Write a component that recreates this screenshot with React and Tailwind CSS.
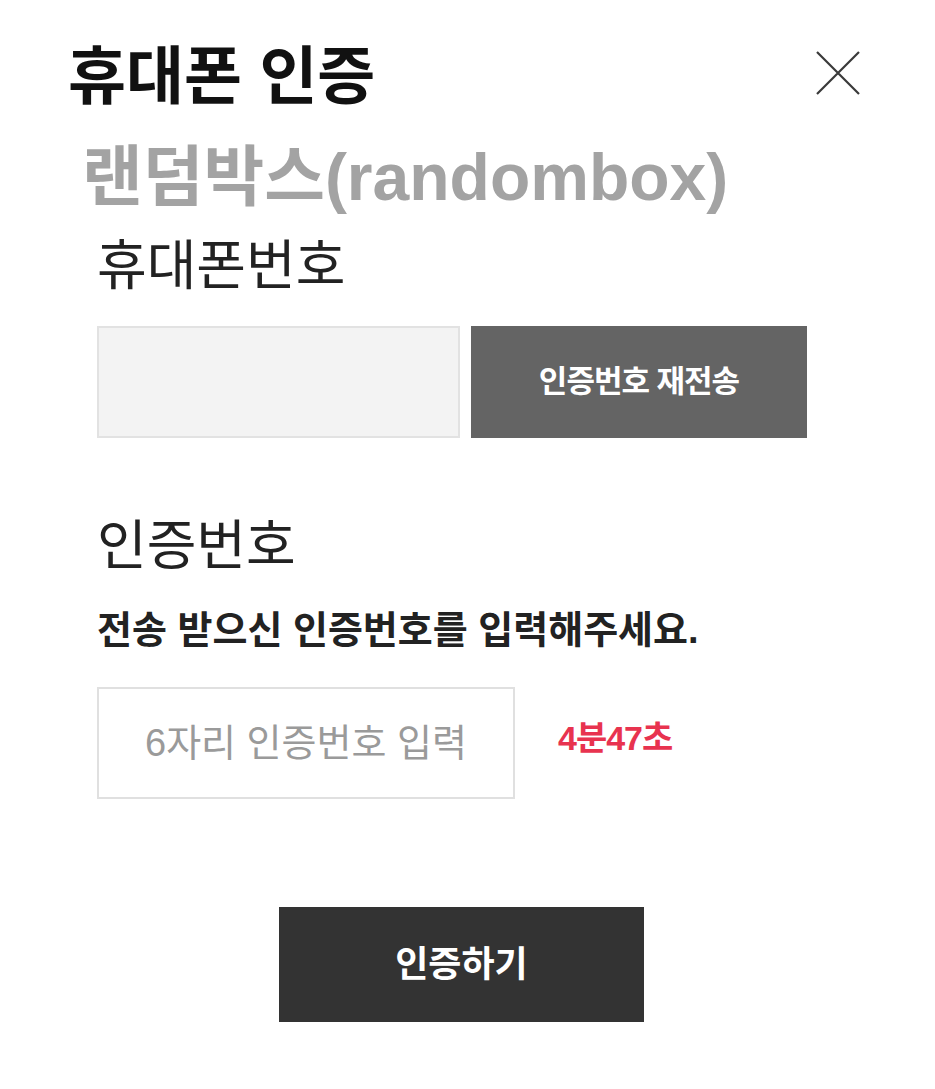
import { useState } from "react";

const font = { fontFamily: '"Liberation Sans", "Noto Sans CJK KR", sans-serif' };

export default function App() {
  const [phone, setPhone] = useState("");
  const [code, setCode] = useState("");

  return (
    <div className="w-[935px] h-[1089px] bg-white relative" style={font}>
      <div className="pl-[68px] pr-[72px] pt-[45px]">
        <div className="flex items-start justify-between">
          <h1 className="text-[63px] leading-none font-bold text-[#111]">휴대폰 인증</h1>
          <button className="mt-[3px] w-[50px] h-[50px] flex items-center justify-center">
            <svg width="48" height="48" viewBox="0 0 48 48">
              <path d="M3 3 L45 45 M45 3 L3 45" stroke="#3a3a3a" strokeWidth="2.2" fill="none" />
            </svg>
          </button>
        </div>
        <div className="mt-[36px] ml-[14px] text-[66px] leading-none font-bold text-[#a3a3a3]">랜덤박스(randombox)</div>
      </div>

      <div className="pl-[97px] pr-[128px]">
        <div className="mt-[29px] text-[54px] leading-none text-[#222]">휴대폰번호</div>
        <div className="mt-[33px] flex gap-[11px]">
          <input
            value={phone}
            onChange={(e) => setPhone(e.target.value)}
            className="w-[363px] h-[112px] bg-[#f3f3f3] border-2 border-[#e2e2e2] outline-none px-4 text-[30px]"
          />
          <button className="w-[336px] h-[112px] bg-[#646464] text-white text-[31px] font-bold tracking-[-1px]">
            인증번호 재전송
          </button>
        </div>

        <div className="mt-[81px] text-[54px] leading-none text-[#222]">인증번호</div>
        <div className="mt-[38px] text-[38px] leading-none font-bold text-[#222]">
          전송 받으신 인증번호를 입력해주세요.
        </div>
        <div className="mt-[38px] flex items-center">
          <input
            value={code}
            onChange={(e) => setCode(e.target.value)}
            placeholder="6자리 인증번호 입력"
            className="w-[418px] h-[112px] bg-white border-2 border-[#e0e0e0] outline-none pl-[46px] text-[38px] text-[#333] placeholder:text-[#9a9a9a]"
          />
          <span className="ml-[43px] mb-[10px] text-[34px] font-bold text-[#e8334f] tracking-[-1px]">4분47초</span>
        </div>
      </div>

      <div className="mt-[108px] flex justify-center pr-[12px]">
        <button className="w-[365px] h-[115px] bg-[#333333] text-white text-[36px] font-bold">
          인증하기
        </button>
      </div>
    </div>
  );
}
